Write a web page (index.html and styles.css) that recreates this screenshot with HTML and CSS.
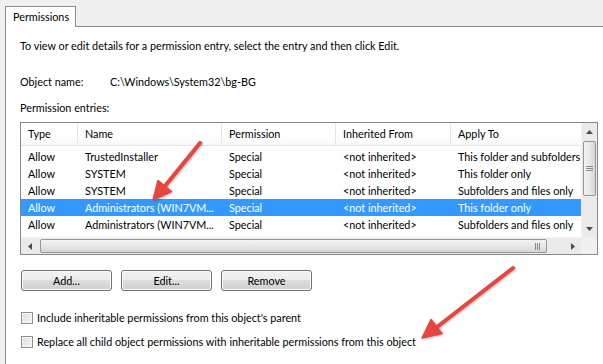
FILE: index.html
```html
<!DOCTYPE html>
<html>
<head>
<meta charset="utf-8">
<link rel="stylesheet" href="styles.css">
</head>
<body>
<div class="tabs"><div class="tab">Permissions</div></div>
<div class="panel">
  <p class="intro">To view or edit details for a permission entry, select the entry and then click Edit.</p>
  <div class="objrow"><span class="objlabel">Object name:</span><span>C:\Windows\System32\bg-BG</span></div>
  <div class="entries-label">Permission entries:</div>
  <div class="listbox">
    <div class="list-main">
      <div class="list-view">
        <div class="row head">
          <div class="cell">Type</div><div class="cell">Name</div><div class="cell">Permission</div><div class="cell">Inherited From</div><div class="cell">Apply To</div>
        </div>
        <div class="rows">
          <div class="row"><div class="cell">Allow</div><div class="cell">TrustedInstaller</div><div class="cell">Special</div><div class="cell">&lt;not inherited&gt;</div><div class="cell">This folder and subfolders</div></div>
          <div class="row"><div class="cell">Allow</div><div class="cell">SYSTEM</div><div class="cell">Special</div><div class="cell">&lt;not inherited&gt;</div><div class="cell">This folder only</div></div>
          <div class="row"><div class="cell">Allow</div><div class="cell">SYSTEM</div><div class="cell">Special</div><div class="cell">&lt;not inherited&gt;</div><div class="cell">Subfolders and files only</div></div>
          <div class="row sel"><div class="cell">Allow</div><div class="cell">Administrators (WIN7VM...</div><div class="cell">Special</div><div class="cell">&lt;not inherited&gt;</div><div class="cell">This folder only</div></div>
          <div class="row"><div class="cell">Allow</div><div class="cell">Administrators (WIN7VM...</div><div class="cell">Special</div><div class="cell">&lt;not inherited&gt;</div><div class="cell">Subfolders and files only</div></div>
          <div class="row"><div class="cell">Allow</div><div class="cell">Administrators (WIN7VM...</div><div class="cell">Special</div><div class="cell">&lt;not inherited&gt;</div><div class="cell">This folder and subfolders</div></div>
        </div>
      </div>
      <div class="vscroll">
        <div class="sbtn"><svg width="7" height="4" viewBox="0 0 7 4"><path d="M0 4L3.5 0L7 4Z" fill="#4d4d4d"/></svg></div>
        <div class="vtrack">
          <div class="vthumb"><span class="grip-v"></span></div>
        </div>
        <div class="sbtn"><svg width="7" height="4" viewBox="0 0 7 4"><path d="M0 0L7 0L3.5 4Z" fill="#4d4d4d"/></svg></div>
      </div>
    </div>
    <div class="hscroll-row">
      <div class="hscroll">
        <div class="hbtn"><svg width="4" height="7" viewBox="0 0 4 7"><path d="M4 0L4 7L0 3.5Z" fill="#4d4d4d"/></svg></div>
        <div class="htrack"><div class="hthumb"><span class="grip-h"></span></div></div>
        <div class="hbtn"><svg width="4" height="7" viewBox="0 0 4 7"><path d="M0 0L4 3.5L0 7Z" fill="#4d4d4d"/></svg></div>
      </div>
      <div class="corner"></div>
    </div>
  </div>
  <div class="buttons">
    <button class="btn">Add...</button>
    <button class="btn">Edit...</button>
    <button class="btn">Remove</button>
  </div>
  <label class="check check-first"><span class="box"></span>Include inheritable permissions from this object's parent</label>
  <label class="check"><span class="box"></span>Replace all child object permissions with inheritable permissions from this object</label>
</div>
<svg class="arrows" width="603" height="364" viewBox="0 0 603 364">
  <g fill="#e8453f" stroke="#e8453f" stroke-linecap="round" stroke-linejoin="round">
    <line x1="200" y1="143" x2="165" y2="186" stroke-width="4"/>
    <path d="M153 200L171.5 191.5L158 180.5Z" stroke-width="1.5"/>
    <line x1="513" y1="268" x2="437" y2="327" stroke-width="4"/>
    <path d="M422 338L442 333.5L431 319.5Z" stroke-width="1.5"/>
  </g>
</svg>
</body>
</html>
```
FILE: styles.css
```css
* { box-sizing: border-box; }
html, body { margin: 0; padding: 0; }
body {
  width: 603px;
  height: 364px;
  overflow: hidden;
  background: #f0f0f0;
  font-family: "Lato", "Noto Sans", sans-serif;
  font-size: 10.8px;
  color: #000;
  position: relative;
}
.tabs {
  height: 26px;
  padding-left: 5px;
  padding-top: 6px;
  position: relative;
  z-index: 2;
}
.tab {
  width: 71px;
  height: 21px;
  background: #fff;
  border: 1px solid #898c95;
  border-bottom: none;
  padding-left: 7px;
  line-height: 19px;
  white-space: nowrap;
}
.panel {
  margin-left: 5px;
  height: 338px;
  background: #fff;
  border-top: 1px solid #898c95;
  border-left: 1px solid #898c95;
  padding-left: 14px;
  padding-top: 10px;
}
.intro { margin: 0; line-height: 18px; }
.objrow { margin-top: 18px; line-height: 18px; display: flex; }
.objlabel { width: 90px; }
.entries-label { margin-top: 8px; line-height: 18px; }
.listbox {
  margin-top: 5px;
  width: 578px;
  height: 133px;
  border: 1px solid #828790;
  display: flex;
  flex-direction: column;
}
.list-main { display: flex; height: 114px; }
.list-view { width: 560px; overflow: hidden; }
.row {
  display: grid;
  grid-template-columns: 57px 144px 114px 115px 160px;
  height: 17px;
  line-height: 17px;
  white-space: nowrap;
}
.cell { padding-left: 7px; overflow: hidden; }
.head {
  height: 23px;
  line-height: 22px;
  background: linear-gradient(#ffffff, #ffffff 60%, #f7f8fa);
  border-bottom: 1px solid #e5e5e5;
}
.head .cell { border-right: 1px solid #e5e5e5; }
.rows { padding-top: 2px; }
.row.sel { background: #3399ff; color: #fff; }
.vscroll {
  width: 16px;
  background: #eaeaea;
  display: flex;
  flex-direction: column;
  border-left: 1px solid #f4f4f4;
}
.sbtn { height: 17px; display: flex; align-items: center; justify-content: center; }
.vtrack { flex: 1; padding: 1px 1px 0 1px; }
.vthumb {
  height: 55px;
  border: 1px solid #979797;
  border-radius: 2px;
  background: linear-gradient(90deg, #f3f3f3, #e8e8e8 50%, #d6d6d6);
  display: flex;
  align-items: center;
  justify-content: center;
}
.grip-v {
  width: 7px;
  height: 5px;
  border-top: 1px solid #8a8a8a;
  border-bottom: 1px solid #8a8a8a;
  position: relative;
}
.grip-v::after {
  content: "";
  position: absolute;
  left: 0; right: 0; top: 1px;
  border-top: 1px solid #8a8a8a;
}
.hscroll-row { display: flex; height: 17px; }
.hscroll {
  width: 560px;
  display: flex;
  background: #eaeaea;
  border-top: 1px solid #f4f4f4;
}
.hbtn { width: 17px; display: flex; align-items: center; justify-content: center; }
.htrack { flex: 1; padding: 1px 1px 1px 2px; }
.hthumb {
  width: 507px;
  height: 100%;
  border: 1px solid #979797;
  border-radius: 2px;
  background: linear-gradient(#f3f3f3, #e8e8e8 50%, #d6d6d6);
  display: flex;
  align-items: center;
  justify-content: flex-end;
  padding-right: 6px;
}
.grip-h {
  width: 5px;
  height: 7px;
  border-left: 1px solid #8a8a8a;
  border-right: 1px solid #8a8a8a;
  position: relative;
}
.grip-h::after {
  content: "";
  position: absolute;
  top: 0; bottom: 0; left: 1px;
  border-left: 1px solid #8a8a8a;
}
.corner { width: 16px; background: #f0f0f0; }
.buttons { display: flex; gap: 9px; margin-top: 15px; padding-left: 1px; }
.btn {
  width: 91px;
  height: 21px;
  font: inherit;
  color: #000;
  border: 1px solid #707070;
  border-radius: 3px;
  background: linear-gradient(#f2f2f2, #ebebeb 45%, #dddddd 50%, #cfcfcf);
  box-shadow: inset 0 0 0 1px #fcfcfc;
  padding: 0;
  line-height: 18px;
}
.check {
  display: flex;
  align-items: center;
  height: 16px;
  line-height: 16px;
  margin-top: 6px;
  padding-left: 1px;
}
.check-first { margin-top: 19px; }
.box {
  width: 12px;
  height: 12px;
  border: 1px solid #8e8f8f;
  background: linear-gradient(135deg, #dcdcdc, #f6f6f6);
  box-shadow: inset 0 0 0 1px #f4f4f4;
  margin-right: 4px;
  flex: none;
}
.check + .check { margin-top: 8px; }
.arrows {
  position: absolute;
  left: 0;
  top: 0;
  pointer-events: none;
  z-index: 5;
  filter: drop-shadow(1px 1px 1px rgba(0,0,0,0.25));
}
```
